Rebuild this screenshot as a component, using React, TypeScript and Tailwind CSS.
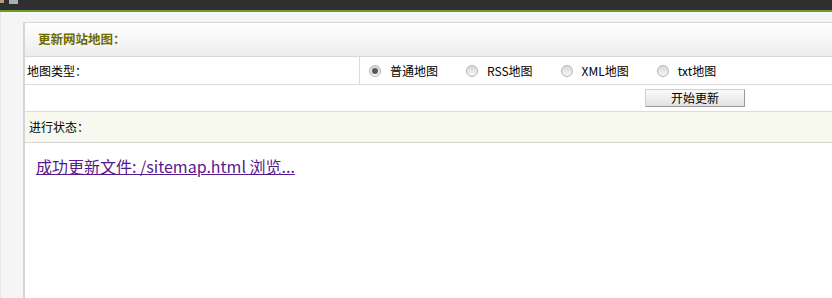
const TYPES = [
  { label: '普通地图', checked: true },
  { label: 'RSS地图', checked: false },
  { label: 'XML地图', checked: false },
  { label: 'txt地图', checked: false },
]

function Radio({ checked }: { checked: boolean }) {
  return (
    <span className="relative inline-flex h-[12px] w-[12px] items-center justify-center rounded-full border border-[#b5b5b5] bg-gradient-to-b from-[#d8d8d8] to-[#f7f7f7]">
      {checked && <span className="h-[6px] w-[6px] rounded-full bg-[#5a5a5a]" />}
    </span>
  )
}

export default function App() {
  return (
    <div
      className="flex h-[298px] w-[832px] flex-col overflow-hidden bg-[#f5f5f5] text-[12px] text-black"
      style={{ fontFamily: '"Noto Sans CJK SC", "Liberation Sans", sans-serif' }}
    >
      <div className="flex h-[10px] items-start gap-[5px] bg-[#2f2f2f]">
        <div className="h-[3px] w-[4px] bg-[#b39b74]" />
        <div className="h-[4px] w-[9px] bg-[#a9aeb5]" />
      </div>
      <div className="h-[2px] bg-[#6c9a2c]" />
      <div className="flex flex-1">
        <div className="w-[23px] shrink-0 border-l border-[#e6e6e6] bg-[#f5f5f5]" />
        <div className="flex flex-1 flex-col pt-[10px]">
          <div className="flex flex-1 flex-col border-l-2 border-t border-[#d6d6d6] bg-white">
            <div className="flex h-[34px] items-center border-b border-[#d8d8d8] bg-gradient-to-b from-white to-[#ededed] pl-[13px]">
              <span className="text-[12.5px] font-bold text-[#6e6a00]">更新网站地图：</span>
            </div>
            <div className="flex h-[28px] border-b border-[#dcdcdc]">
              <div className="flex w-[335px] items-center border-r border-[#dcdcdc] pl-[2px]">地图类型：</div>
              <div className="flex items-center pl-[9px]">
                {TYPES.map((t) => (
                  <label key={t.label} className="mr-[28px] flex items-center">
                    <Radio checked={t.checked} />
                    <span className="ml-[9px]">{t.label}</span>
                  </label>
                ))}
              </div>
            </div>
            <div className="flex h-[27px] items-center border-b border-[#dcdcdc] pl-[620px]">
              <button className="h-[18px] w-[100px] border border-[#d0d0d0] border-b-[#9a9a9a] border-r-[#9a9a9a] bg-gradient-to-b from-[#fafafa] to-[#e2e2e2] text-[12px] leading-none">
                开始更新
              </button>
            </div>
            <div className="flex h-[31px] items-center border-b border-[#d6d6d6] bg-[#f8f9ee] pl-[4px]">进行状态：</div>
            <div className="pl-[11px] pt-[11px]">
              <a href="#" className="text-[16px] text-[#551a8b] underline">
                成功更新文件: /sitemap.html 浏览...
              </a>
            </div>
          </div>
        </div>
      </div>
    </div>
  )
}
